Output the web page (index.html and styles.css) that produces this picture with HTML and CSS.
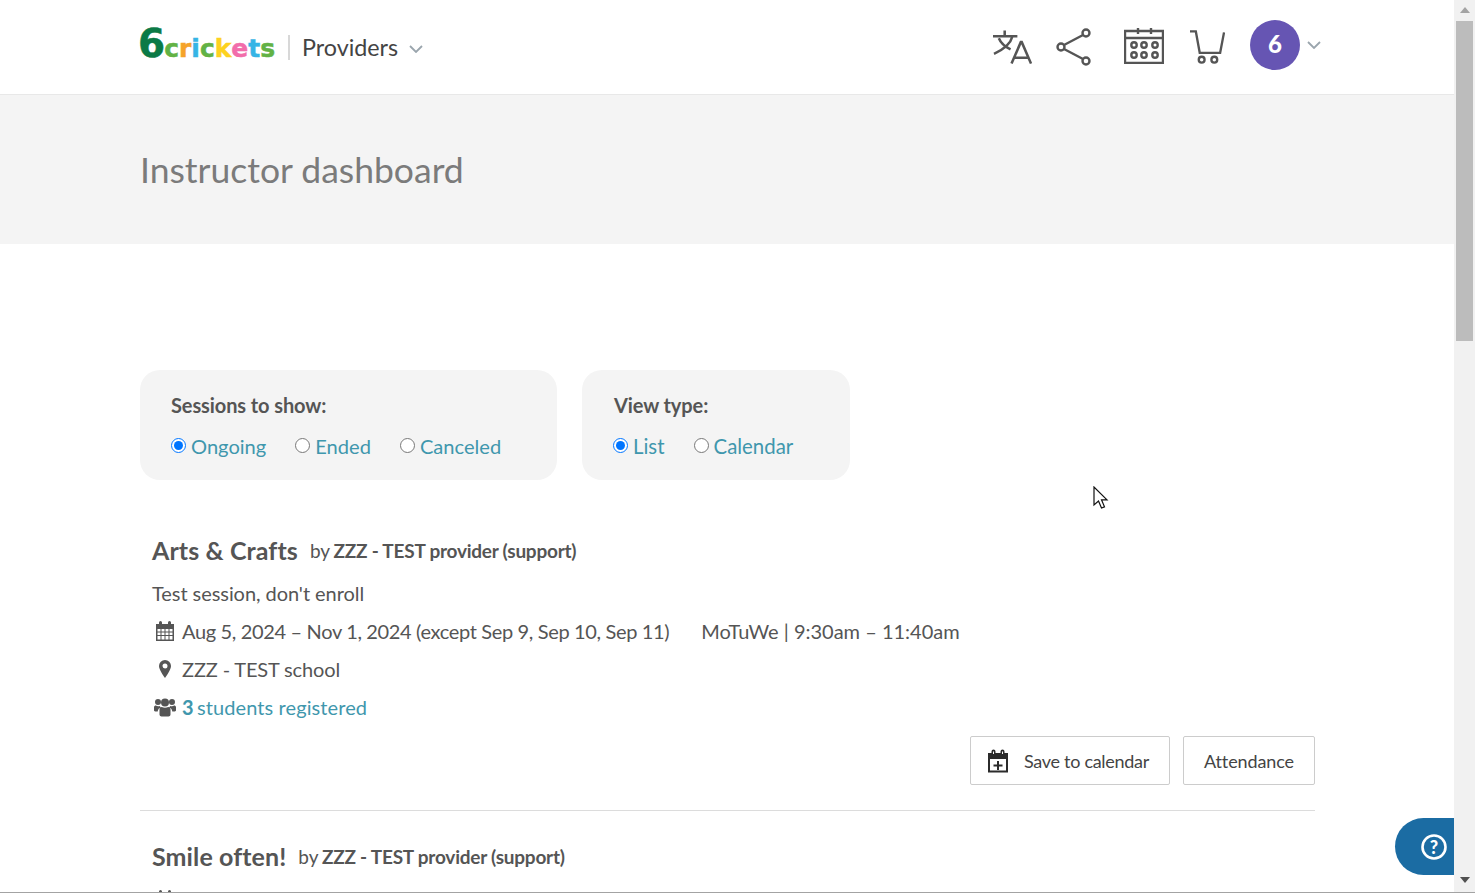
FILE: index.html
```html
<!DOCTYPE html>
<html lang="en">
<head>
<meta charset="utf-8">
<title>Instructor dashboard</title>
<link rel="stylesheet" href="styles.css">
</head>
<body>
<div class="window">
  <div class="page">
    <header class="topbar">
      <div class="brand">
        <div class="logo" aria-label="6crickets"><span class="l6">6</span><span class="lc1">c</span><span class="lr">r</span><span class="li">i</span><span class="lc2">c</span><span class="lk">k</span><span class="le">e</span><span class="lt">t</span><span class="ls">s</span></div>
        <span class="brand-sep"></span>
        <span class="brand-name">Providers</span>
        <svg class="chev chev-brand" viewBox="0 0 14 8"><path d="M1 1l6 6 6-6"/></svg>
      </div>
      <nav class="tools">
        <svg class="tool tool-lang" viewBox="0 0 40 36"><path d="M0 7h25M12 1v6M20 7c-2 8-8 13-19 18M6 9c2 5 7 9 12 11.500M19 35l9.500-22h1L39 35M22 29h14"/></svg>
        <svg class="tool tool-share" viewBox="0 0 36 38"><circle cx="30" cy="5" r="3.500"/><circle cx="5" cy="19" r="3.500"/><circle cx="30" cy="33" r="3.500"/><path d="M27 7L8 17M8 21l19 10"/></svg>
        <svg class="tool tool-cal" viewBox="0 0 40 36"><path d="M1 3h38v32H1zM1 10h38M14 0v6M27 0v6"/><circle cx="10" cy="17" r="2.700"/><circle cx="20" cy="17" r="2.700"/><circle cx="31" cy="17" r="2.700"/><circle cx="10" cy="27" r="2.700"/><circle cx="20" cy="27" r="2.700"/><circle cx="31" cy="27" r="2.700"/></svg>
        <svg class="tool tool-cart" viewBox="0 0 36 36"><path d="M0 2h6l4 22h21l4-21M11 24h20"/><circle cx="12" cy="31" r="3"/><circle cx="25" cy="31" r="3"/></svg>
        <span class="avatar">6</span>
        <svg class="chev chev-user" viewBox="0 0 14 8"><path d="M1 1l6 6 6-6"/></svg>
      </nav>
    </header>

    <section class="hero"><h1>Instructor dashboard</h1></section>

    <main class="content">
      <div class="filters">
        <div class="filter filter-sessions">
          <div class="filter-title">Sessions to show:</div>
          <div class="radios">
            <label class="radio"><input type="radio" name="s" checked><span>Ongoing</span></label>
            <label class="radio"><input type="radio" name="s"><span>Ended</span></label>
            <label class="radio"><input type="radio" name="s"><span>Canceled</span></label>
          </div>
        </div>
        <div class="filter filter-view">
          <div class="filter-title">View type:</div>
          <div class="radios">
            <label class="radio"><input type="radio" name="v" checked><span>List</span></label>
            <label class="radio"><input type="radio" name="v"><span>Calendar</span></label>
          </div>
        </div>
      </div>

      <article class="session">
        <div class="session-head"><h2>Arts &amp; Crafts</h2><span class="by">by <b>ZZZ - TEST provider (support)</b></span></div>
        <p class="row row-plain">Test session, don't enroll</p>
        <p class="row">
          <svg class="ico" viewBox="0 0 20 20"><path class="fill" d="M1 3h3V1.500a1.500 1.500 0 0 1 3 0V3h6V1.500a1.500 1.500 0 0 1 3 0V3h3v17H1zM2.500 8v2.500h3V8zM6.500 8v2.500h3V8zM10.500 8v2.500h3V8zM14.500 8v2.500h3V8zM2.500 11.500V14h3v-2.500zM6.500 11.500V14h3v-2.500zM10.500 11.500V14h3v-2.500zM14.500 11.500V14h3v-2.500zM2.500 15v3.500h3V15zM6.500 15v3.500h3V15zM10.500 15v3.500h3V15zM14.500 15v3.500h3V15z"/></svg>
          <span class="dates">Aug 5, 2024 – Nov 1, 2024 (except Sep 9, Sep 10, Sep 11)</span><span class="times">MoTuWe | 9:30am – 11:40am</span>
        </p>
        <p class="row tight">
          <svg class="ico" viewBox="0 0 20 20"><path class="fill" d="M10 1a6 6 0 0 0-6 6c0 3.500 4.500 10 6 12 1.500-2 6-8.500 6-12a6 6 0 0 0-6-6zm0 3.500a2.500 2.500 0 1 1 0 5 2.500 2.500 0 0 1 0-5z"/></svg>
          <span>ZZZ - TEST school</span>
        </p>
        <p class="row">
          <svg class="ico ico-wide" viewBox="0 0 22 20"><path class="fill" d="M11 1.500a4 4 0 1 1 0 8 4 4 0 0 1 0-8zM4 2a3 3 0 1 1 0 6 3 3 0 0 1 0-6zM18 2a3 3 0 1 1 0 6 3 3 0 0 1 0-6zM5.500 12.500c0-1.500 1-2.500 2.300-2.500 1 .6 2 .8 3.200.8s2.200-.2 3.200-.8c1.300 0 2.300 1 2.300 2.500v5c0 1.300-1 2-2 2h-7c-1 0-2-.7-2-2zM0 10c0-.8 1-1.500 1.800-1.500.8.500 1.500.7 2.400.7.600 0 1.100-.1 1.600-.3.300.7.600 1.100 1.100 1.500-1.600.4-3 1.600-3.200 4H1.200C.5 14.400 0 14 0 13.300zM22 10c0-.8-1-1.500-1.800-1.500-.8.500-1.500.7-2.400.7-.6 0-1.100-.1-1.600-.3-.3.7-.6 1.100-1.100 1.500 1.600.4 3 1.600 3.200 4h2.500c.7 0 1.200-.4 1.200-1.100z"/></svg>
          <a class="link"><b>3</b> students registered</a>
        </p>
        <div class="actions">
          <button class="btn btn-save" type="button">
            <svg class="btn-ico" viewBox="0 0 22 24"><path d="M1 4h3.500V2.500a2 2 0 0 1 4 0V4h5V2.500a2 2 0 0 1 4 0V4H21v19.500H1zM3 10v11.500h16V10zM6 2.500V5h1V2.500zM15 2.500V5h1V2.500zM10 12h2v3.500h3.500v2H12V21h-2v-3.500H6.500v-2H10z"/></svg>
            Save to calendar
          </button>
          <button class="btn" type="button">Attendance</button>
        </div>
      </article>

      <article class="session session-next">
        <div class="session-head"><h2>Smile often!</h2><span class="by">by <b>ZZZ - TEST provider (support)</b></span></div>
        <p class="row">
          <svg class="ico" viewBox="0 0 20 20"><path class="fill" d="M1 3h3V1.500a1.500 1.500 0 0 1 3 0V3h6V1.500a1.500 1.500 0 0 1 3 0V3h3v17H1z"/></svg>
        </p>
      </article>
    </main>

    <button class="help" type="button" aria-label="Help">
      <svg viewBox="0 0 26 26"><circle cx="13" cy="13" r="11.500"/><text x="13" y="19.500" text-anchor="middle">?</text></svg>
    </button>
    <svg class="cursor" viewBox="0 0 16 24"><path d="M1 1v18l4.500-4 3 7 3-1.200-3-7H14z"/></svg>
  </div>
  <aside class="scrollbar" aria-hidden="true">
    <svg class="arrow" viewBox="0 0 10 6"><path d="M5 0l5 6H0z"/></svg>
    <div class="thumb"></div>
    <svg class="arrow arrow-down" viewBox="0 0 10 6"><path d="M0 0h10L5 6z"/></svg>
  </aside>
</div>
</body>
</html>
```

FILE: styles.css
```css
* { box-sizing: border-box; }
html, body { margin: 0; height: 100%; overflow: hidden; }
body { font-family: Lato, "Liberation Sans", sans-serif; color: #555; background: #fff; }
.window { display: flex; height: 893px; border-bottom: 1px solid #a3a3a3; }
.page { position: relative; flex: 1; min-width: 0; overflow: hidden; }

.topbar { height: 95px; display: flex; align-items: center; justify-content: space-between; padding: 0 133px 0 140px; border-bottom: 1px solid #e8e8e8; box-shadow: 0 1px 2px rgba(0,0,0,.04); }
.brand { display: flex; align-items: center; }
.logo { display: flex; align-items: baseline; width: 136px; margin-left: -2px; margin-right: 2px; margin-top: -2px; font-family: "DejaVu Sans", sans-serif; font-weight: 700; font-size: 25px; line-height: 32px; letter-spacing: 0; -webkit-text-stroke: .5px currentColor; white-space: nowrap; }
.l6 { font-size: 39px; color: #0b7a46; letter-spacing: -1px; }
.lc1 { color: #62b245; } .lr { color: #f5a32a; } .li { color: #36b4e5; } .lc2 { color: #62b245; }
.lk { color: #fdd21f; } .le { color: #f26daa; } .lt { color: #36b4e5; } .ls { color: #62b245; }
.brand-sep { width: 2px; height: 25px; background: #d8d8d8; margin: 0 12px 0 12px; }
.brand-name { font-size: 23.300px; color: #444; }
.chev { fill: none; stroke: #9aa5ad; stroke-width: 1.800; width: 14px; height: 8px; }
.chev-brand { margin: 4px 0 0 11px; }

.tools { display: flex; align-items: center; margin-top: -4px; }
.tool { fill: none; stroke: #555; stroke-width: 2.400; display: block; }
.tool-lang { width: 39px; height: 36px; margin: 3px 0 0 -1px; stroke-width: 2.600; }
.tool-share { width: 36px; height: 38px; margin: 3px 0 0 24px; }
.tool-cal { width: 40px; height: 36px; margin: 1px 0 0 32px; }
.tool-cart { width: 35px; height: 36px; margin: 4px 0 0 26px; }
.avatar { width: 50px; height: 50px; margin-left: 25px; padding-bottom: 3px; border-radius: 50%; background: #6655b3; color: #fff; font-size: 24px; font-weight: 900; display: flex; align-items: center; justify-content: center; }
.chev-user { margin-left: 7px; }

.hero { height: 149px; background: #f4f4f4; padding: 0 140px; display: flex; align-items: center; }
h1 { margin: 0; font-size: 35.500px; font-weight: 400; color: #7b7b7b; }

.content { padding: 126px 139px 0 140px; }
.filters { display: flex; gap: 25px; }
.filter { height: 110px; background: #f4f4f4; border-radius: 20px; padding: 22px 30px 0 31px; }
.filter-sessions { width: 417px; }
.filter-view { width: 268px; }
.filter-view .filter-title { margin-left: 1px; }
.filter-title { font-size: 20px; line-height: 26px; font-weight: 700; color: #555; letter-spacing: -.1px; }
.radios { display: flex; gap: 29px; margin-top: 15px; }
.radio { display: flex; align-items: center; font-size: 20.100px; line-height: 26px; color: #3f97ad; }
.filter-view .radio { font-size: 20.400px; }
.radio input { width: 15px; height: 15px; margin: 0 5px 2px 0; accent-color: #0075ff; }

.session { padding: 0 0 0 12px; }
.session:first-of-type { border-bottom: 1px solid #dcdcdc; }
.session-head { display: flex; align-items: center; gap: 12px; margin-top: 53px; line-height: 34px; }
h2 { margin: 0; font-size: 25px; font-weight: 700; color: #555; letter-spacing: .1px; }
.by { font-size: 19px; line-height: 30px; color: #555; margin-top: 2px; }
.by b { letter-spacing: -.23px; margin-left: -1px; }
.row { display: flex; align-items: center; margin: 0; height: 38px; font-size: 20px; color: #555; }
.row-plain { margin-top: 7px; letter-spacing: -.06px; }
.tight { letter-spacing: -.15px; }
.dates { letter-spacing: -.35px; }
.ico { width: 20px; height: 20px; margin: 0 7px 0 3px; flex: none; }
.ico-wide { width: 22px; margin: 0 6px 0 2px; }
.fill { fill: #555; fill-rule: evenodd; }
.times { margin-left: 32px; }
.link { color: #3f97ad; letter-spacing: .1px; }
.link b { font-weight: 700; margin-right: -2px; }

.actions { display: flex; justify-content: flex-end; gap: 13px; margin-top: 10px; padding-bottom: 25px; }
.btn { height: 49px; padding: 0 20px; background: #fff; border: 1px solid #ccc; border-radius: 2px; font: 400 18px Lato, sans-serif; color: #444; letter-spacing: -.1px; display: flex; align-items: center; }
.btn-save { padding-left: 16px; gap: 15px; letter-spacing: -.3px; }
.btn-ico { width: 22px; height: 24px; fill: #2b2b2b; fill-rule: evenodd; }

.session-next { margin-top: -25px; }
.session-next .row { margin-top: 8px; }

.help { position: absolute; right: 0; top: 818px; width: 59px; height: 57px; padding: 0 7px 0 0; background: #1b6ca3; border: 0; border-radius: 29px 0 0 29px; display: flex; align-items: center; justify-content: flex-end; }
.help svg { width: 26px; height: 26px; }
.help circle { fill: none; stroke: #fff; stroke-width: 2.600; }
.help text { fill: #fff; font: 900 18px Lato, sans-serif; }

.cursor { position: absolute; left: 1093px; top: 486px; width: 16px; height: 24px; fill: #fff; stroke: #111; stroke-width: 1.200; }

.scrollbar { width: 21px; flex: none; background: #f1f1f1; display: flex; flex-direction: column; align-items: center; padding: 7px 2px 0; }
.arrow { width: 10px; height: 6px; fill: #a3a3a3; flex: none; }
.arrow-down { fill: #505050; margin-top: 536px; }
.thumb { width: 17px; height: 320px; margin-top: 8px; background: #bcbcbc; flex: none; }
```
